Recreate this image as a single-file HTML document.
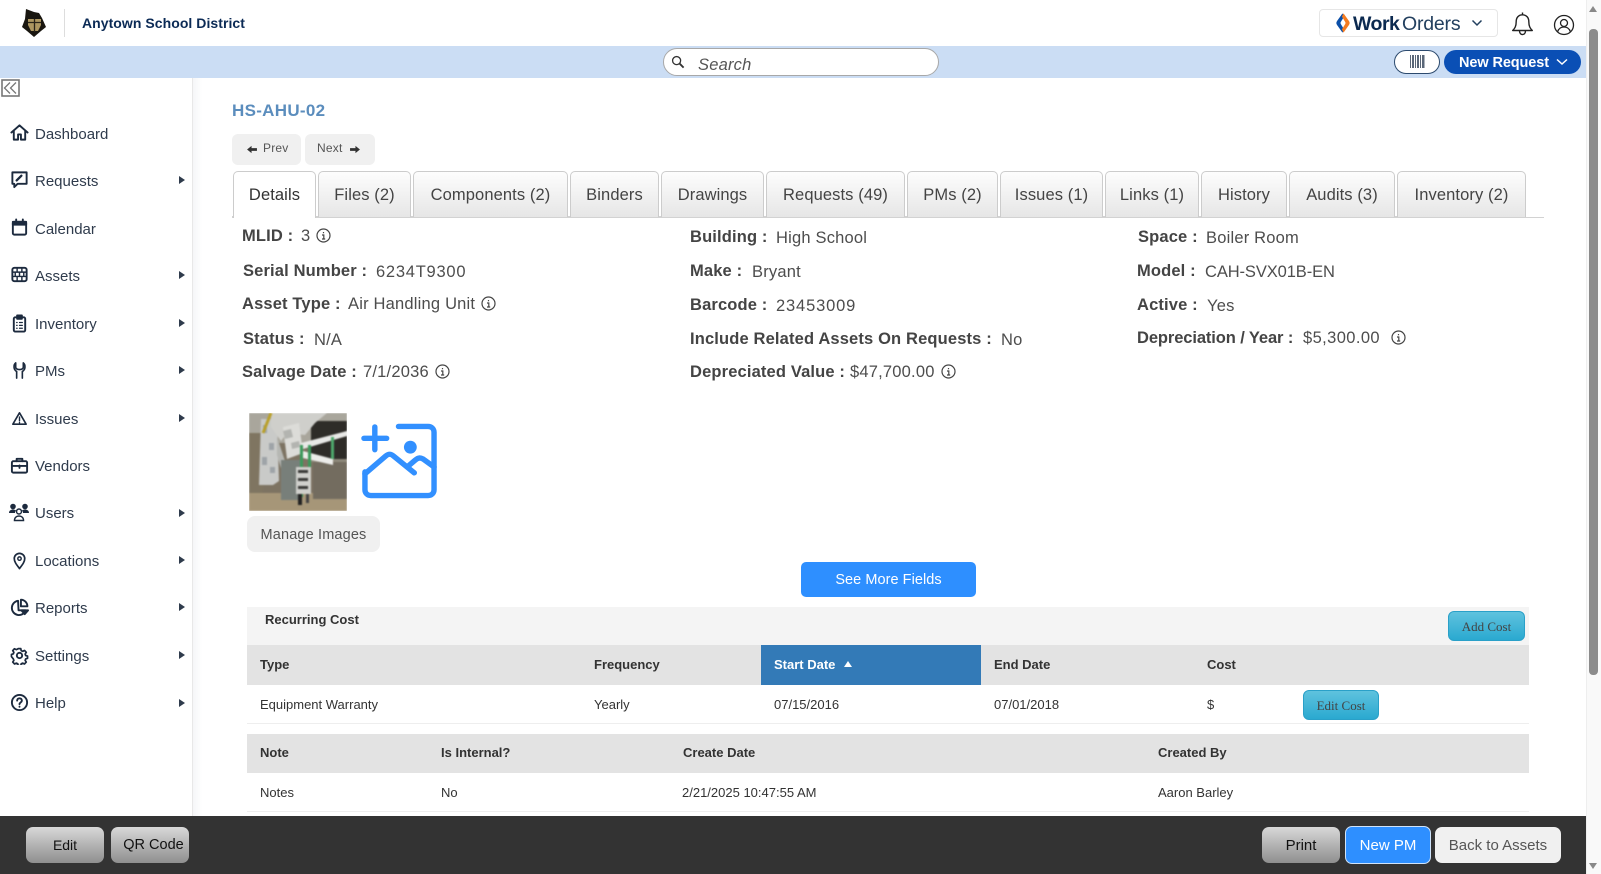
<!DOCTYPE html>
<html><head><meta charset="utf-8"><title>HS-AHU-02</title>
<style>
*{box-sizing:border-box}
html,body{margin:0;padding:0;width:1601px;height:874px;overflow:hidden;background:#fff;font-family:"Liberation Sans",sans-serif}
.a{position:absolute}
.t{position:absolute;white-space:nowrap;height:20px;line-height:20px}
.nav{font-size:15px;color:#2f3b4c;margin-top:.5px}
.arr{position:absolute;left:179px;width:0;height:0;border-left:6px solid #2f3b4c;border-top:4.5px solid transparent;border-bottom:4.5px solid transparent}
.ic{position:absolute;left:9.500px;width:19px;height:19px;fill:none;stroke:#1c2a3e;stroke-width:2;stroke-linecap:round;stroke-linejoin:round}
.tab{position:absolute;top:171px;height:46px;border:1px solid #ccc;border-bottom:0;border-radius:5px 5px 0 0;background:linear-gradient(#fdfdfd,#e6e6e6);color:#444;font-size:16.500px;letter-spacing:.1px;text-align:center;line-height:47px}
.l{font-weight:bold;font-size:16.500px;color:#444;letter-spacing:.15px;margin-top:.5px}
.v{font-size:16.500px;color:#4d4d4d;letter-spacing:.2px;margin-top:.5px}
.info{position:absolute;width:15px;height:15px;fill:none;stroke:#444;stroke-width:1.2}
.th{font-weight:bold;font-size:13px;color:#333;margin-top:1px}
.td{font-size:13px;color:#333;margin-top:1px}
.fb{position:absolute;top:827px;height:36px;border-radius:7px;text-align:center;line-height:37px;font-size:15px;color:#111;background:linear-gradient(#d8d8d8,#8f8f8f)}
.cb{position:absolute;border:1px solid #2aa0c8;border-radius:6px;background:linear-gradient(#5fc2de,#2aa9d0);font-family:"Liberation Serif",serif;font-size:13px;color:#444;text-align:center}
</style></head><body>

<!-- header -->
<svg class="a" style="left:21px;top:8px" width="27" height="30" viewBox="0 0 27 30">
<path d="M5 1l8 3 5 1 3 5 4 9-5 4-7 6-7-6-5-4 3-8z" fill="#191610"/>
<path d="M7 11h13v6l-3 6h-7l-3-6z" fill="#ad9660"/>
<path d="M7 14.500h13M13.500 11v13" stroke="#2a2418" stroke-width="1.300"/>
</svg>
<div class="a" style="left:64px;top:9px;width:1px;height:28px;background:#ddd"></div>
<div class="t" style="left:82px;top:13px;font-weight:bold;font-size:14px;color:#0b2a55;letter-spacing:.05px">Anytown School District</div>

<div class="a" style="left:1319px;top:9px;width:179px;height:28px;border:1px solid #e6e6e6;border-radius:4px"></div>
<svg class="a" style="left:1335px;top:12px" width="16" height="22" viewBox="0 0 15 20">
<path d="M7 1L2 8c-1 1.500-1 2.500 0 4l5 7 1.500-3-3-5c-.5-1-.5-1 0-2l3-5z" fill="#0b4fa8"/>
<path d="M8 1l5 7c1 1.500 1 2.500 0 4l-5 7-1.500-3 3-5c.5-1 .5-1 0-2l-3-5z" fill="#f47b20"/>
</svg>
<div class="t" style="left:1353px;top:14px;font-size:19.500px;font-weight:bold;color:#0c2a50;letter-spacing:-.5px">Work</div>
<div class="t" style="left:1402px;top:14px;font-size:19.500px;color:#23405f;letter-spacing:-.2px">Orders</div>
<svg class="a" style="left:1471px;top:19px" width="12" height="8" viewBox="0 0 12 8" fill="none" stroke="#23405f" stroke-width="1.500"><path d="M1.500 1.500L6 6l4.500-4.500"/></svg>
<svg class="a" style="left:1511px;top:11px" width="23" height="25" viewBox="0 0 23 25" fill="none" stroke="#222" stroke-width="1.400" stroke-linejoin="round"><path d="M11.500 1.500v2.300M11.500 3.800c-4 0-6.300 3-6.300 6.700 0 5-1.500 7-3.500 9h19.600c-2-2-3.500-4-3.500-9 0-3.700-2.300-6.700-6.300-6.700zM8.500 19.800c0 5 6 5 6 0"/></svg>
<svg class="a" style="left:1553px;top:14px" width="22" height="22" viewBox="0 0 22 22" fill="none" stroke="#222" stroke-width="1.300"><circle cx="11" cy="11" r="9.500"/><circle cx="11" cy="9" r="3.500"/><path d="M4.500 18c1-3.500 3.500-5 6.500-5s5.500 1.500 6.500 5"/></svg>

<!-- blue bar -->
<div class="a" style="left:0;top:46px;width:1586px;height:32px;background:#cbddf4"></div>
<div class="a" style="left:663px;top:48px;width:276px;height:28px;background:#fff;border:1px solid #a8a8a8;border-radius:14px"></div>
<svg class="a" style="left:671px;top:55px" width="14" height="14" viewBox="0 0 15 15" fill="none" stroke="#333" stroke-width="1.400"><circle cx="6" cy="6" r="4.300"/><path d="M9.200 9.200L13.500 13.500" stroke-width="2"/></svg>
<div class="t" style="left:698px;top:55px;font-size:16.500px;font-style:italic;color:#555;letter-spacing:.2px">Search</div>
<div class="a" style="left:1394px;top:50px;width:46px;height:24px;background:#fff;border:1px solid #2c4a6e;border-radius:12px"></div>
<svg class="a" style="left:1410px;top:55px" width="15" height="13" viewBox="0 0 15 13" fill="#5a6778"><rect x="0" width="1" height="13"/><rect x="2" width="2" height="13"/><rect x="5" width="1" height="13"/><rect x="7" width="2" height="13"/><rect x="10" width="1" height="13"/><rect x="12" width="2.500" height="13"/></svg>
<div class="a" style="left:1444px;top:50px;width:137px;height:24px;background:#0a4fb5;border-radius:12px"></div>
<div class="t" style="left:1459px;top:53px;font-size:14.500px;font-weight:bold;color:#fff;letter-spacing:-.1px">New Request</div>
<svg class="a" style="left:1556px;top:58px" width="12" height="8" viewBox="0 0 12 8" fill="none" stroke="#fff" stroke-width="1.500"><path d="M1 1.500L6 6l5-4.500"/></svg>

<!-- sidebar -->
<div class="a" style="left:192px;top:78px;width:1px;height:738px;background:#e8e8e8"></div>
<div class="a" style="left:193px;top:78px;width:9px;height:738px;background:linear-gradient(90deg,#f5f6f8,#fff)"></div>
<svg class="a" style="left:1px;top:79px" width="19" height="18" viewBox="0 0 19 18" fill="none" stroke="#777"><rect x="1" y="1" width="17" height="16" stroke-width="1.600"/><path d="M9 3.500L3.500 9 9 14.500M15 3.500L9.500 9l5.500 5.500" stroke-width="1.300"/></svg>

<svg class="ic" style="top:123px" viewBox="0 0 20 20"><path d="M1.500 10L10 2.500 18.500 10M4 8v9.500h4.500V12h3v5.500H16V8"/></svg>
<div class="t nav" style="left:35px;top:124px">Dashboard</div>

<svg class="ic" style="top:170px" viewBox="0 0 20 20"><path d="M2.500 2.500h15v12H8L4.500 18v-3.500h-2z"/><path d="M7 11l5-5" stroke-width="2.400"/></svg>
<div class="t nav" style="left:35px;top:171px">Requests</div><div class="arr" style="top:176px"></div>

<svg class="ic" style="top:218px" viewBox="0 0 20 20"><rect x="3" y="4" width="14" height="13.500" rx="1.500"/><path d="M3 4h14v3H3z" fill="#1c2a3e"/><path d="M6.500 1.500v3M13.500 1.500v3"/></svg>
<div class="t nav" style="left:35px;top:219px">Calendar</div>

<svg class="ic" style="top:265px" viewBox="0 0 20 20"><rect x="2.500" y="3" width="15" height="14" rx="2"/><path d="M2.500 7.500h15M2.500 12h15M7.500 3v4.500M12.500 3v4.500M5.500 7.500V12M10 7.500V12M14.500 7.500V12M7.500 12v5M12.500 12v5" stroke-width="1.500"/></svg>
<div class="t nav" style="left:35px;top:266px">Assets</div><div class="arr" style="top:271px"></div>

<svg class="ic" style="top:314px" viewBox="0 0 20 20"><rect x="4" y="3.500" width="12" height="15" rx="1.500"/><rect x="7.500" y="1.500" width="5" height="3.500" fill="#1c2a3e"/><path d="M7 9h.5M10 9h3M7 12h.5M10 12h3M7 15h.5M10 15h3" stroke-width="1.300"/></svg>
<div class="t nav" style="left:35px;top:314px">Inventory</div><div class="arr" style="top:319px"></div>

<svg class="ic" style="top:361px" viewBox="0 0 20 20"><path d="M6 2C3.500 4 3.500 9 7 11v7M14 2c2.500 2 2.500 7-1 9v7M6 2v4.500c0 1.500 1.500 2.500 4 2.500s4-1 4-2.500V2" style="stroke-width:1.700"/></svg>
<div class="t nav" style="left:35px;top:361px">PMs</div><div class="arr" style="top:366px"></div>

<svg class="ic" style="top:409px" viewBox="0 0 20 20"><path d="M10 4l7 12h-14z" style="stroke-width:1.700"/><path d="M10 8.500v4M10 14.300v.3" style="stroke-width:1.500"/></svg>
<div class="t nav" style="left:35px;top:409px">Issues</div><div class="arr" style="top:414px"></div>

<svg class="ic" style="top:456px;left:10px" viewBox="0 0 20 20"><rect x="2" y="5.500" width="16" height="12" rx="1.500"/><path d="M7 5.500V3h6v2.500M2 10.500h16M10 10v2.500"/></svg>
<div class="t nav" style="left:35px;top:456px">Vendors</div>

<svg class="a" style="left:9px;top:503px" width="20" height="19" viewBox="0 0 20 19"><g fill="#1c2a3e"><circle cx="4" cy="3.500" r="2.800"/><circle cx="16" cy="3.500" r="2.800"/><path d="M0 10c0-2.500 2-3.500 4-3.500 1.500 0 2.500.5 3 1-.8.8-1 1.500-1 2.500zM20 10c0-2.500-2-3.500-4-3.500-1.500 0-2.500.5-3 1 .8.8 1 1.500 1 2.500z"/></g><g fill="none" stroke="#1c2a3e" stroke-width="1.500"><circle cx="10" cy="8.500" r="2.500"/><path d="M5.500 17.500c0-3 2-4.500 4.500-4.500s4.500 1.500 4.500 4.500z"/></g></svg>
<div class="t nav" style="left:35px;top:503px">Users</div><div class="arr" style="top:509px"></div>

<svg class="ic" style="top:551px" viewBox="0 0 20 20"><path d="M10 18.500c-3-4-5.500-7-5.500-10.500a5.500 5.500 0 0 1 11 0c0 3.500-2.500 6.500-5.500 10.500z" style="stroke-width:1.800"/><circle cx="10" cy="8" r="1.800" style="stroke-width:1.500"/></svg>
<div class="t nav" style="left:35px;top:551px">Locations</div><div class="arr" style="top:556px"></div>

<svg class="ic" style="top:598px" viewBox="0 0 20 20"><path d="M8.500 3a7.500 7.500 0 1 0 8 10H9z"/><path d="M11.500 1.800a7 7 0 0 1 6.800 7h-6.800z"/><path d="M12 13h7l-3.500 4z" fill="#1c2a3e"/></svg>
<div class="t nav" style="left:35px;top:598px">Reports</div><div class="arr" style="top:603px"></div>

<svg class="ic" style="top:646px" viewBox="0 0 20 20"><circle cx="10" cy="10" r="2.800"/><path d="M8.500 2h3l.5 2.300 1.700.8 2.200-1 2 2.200-1.300 2 .6 1.700 2.200.7v2.600l-2.200.7-.6 1.700 1.300 2-2 2.200-2.200-1-1.700.8-.5 2.300h-3l-.5-2.300-1.700-.8-2.200 1-2-2.200 1.300-2-.6-1.700L.6 11.300V8.700l2.200-.7.6-1.700-1.300-2 2-2.200 2.200 1 1.700-.8z" transform="translate(1 1) scale(.9)"/></svg>
<div class="t nav" style="left:35px;top:646px">Settings</div><div class="arr" style="top:651px"></div>

<svg class="ic" style="top:693px" viewBox="0 0 20 20"><circle cx="10" cy="10" r="8"/><path d="M7.500 8c0-3.200 5-3.200 5 0 0 2-2.500 2-2.500 3.700M10 14.300v.2"/></svg>
<div class="t nav" style="left:35px;top:693px">Help</div><div class="arr" style="top:699px"></div>

<!-- title + nav -->
<div class="t" style="left:232px;top:101px;font-size:17px;font-weight:bold;color:#5b8dbd;letter-spacing:.3px">HS-AHU-02</div>
<div class="a" style="left:232px;top:134px;width:69px;height:31px;background:#f0f0f0;border-radius:6px"></div>
<div class="a" style="left:305px;top:134px;width:70px;height:31px;background:#f0f0f0;border-radius:6px"></div>
<svg class="a" style="left:247px;top:145px" width="10" height="9" viewBox="0 0 11 10" fill="#333"><path d="M0 5l5-4v2.500h6v3H5V9z"/></svg>
<div class="t" style="left:263px;top:138px;font-size:12px;color:#555;letter-spacing:.2px">Prev</div>
<div class="t" style="left:317px;top:138px;font-size:12px;color:#555;letter-spacing:.2px">Next</div>
<svg class="a" style="left:350px;top:145px" width="10" height="9" viewBox="0 0 11 10" fill="#333"><path d="M11 5L6 1v2.500H0v3h6V9z"/></svg>

<!-- tabs -->
<div class="a" style="left:232px;top:216px;width:1312px;height:2px;background:#d2d2d2"></div>
<div class="a" style="left:1526px;top:216px;width:18px;height:1px;background:#fff"></div>
<div class="tab" style="left:233px;width:83px;background:#fff;height:47px;color:#333">Details</div>
<div class="tab" style="left:318px;width:93px">Files (2)</div>
<div class="tab" style="left:413px;width:155px">Components (2)</div>
<div class="tab" style="left:570px;width:89px">Binders</div>
<div class="tab" style="left:661px;width:103px">Drawings</div>
<div class="tab" style="left:766px;width:139px">Requests (49)</div>
<div class="tab" style="left:907px;width:91px">PMs (2)</div>
<div class="tab" style="left:1000px;width:103px">Issues (1)</div>
<div class="tab" style="left:1105px;width:94px">Links (1)</div>
<div class="tab" style="left:1201px;width:86px">History</div>
<div class="tab" style="left:1289px;width:106px">Audits (3)</div>
<div class="tab" style="left:1397px;width:129px">Inventory (2)</div>

<!-- fields col 1 -->
<div class="t l" style="left:242px;top:225px">MLID :</div><div class="t v" style="left:301px;top:225px">3</div>
<svg class="info" style="left:316px;top:228px" viewBox="0 0 15 15"><circle cx="7.500" cy="7.500" r="6.500"/><path d="M7.500 4v1.300M6 7h1.800v4M6 11h3.200"/></svg>
<div class="t l" style="left:243px;top:260px">Serial Number :</div><div class="t v" style="left:376px;top:261px;letter-spacing:.75px">6234T9300</div>
<div class="t l" style="left:242px;top:293px">Asset Type :</div><div class="t v" style="left:348px;top:293px">Air Handling Unit</div>
<svg class="info" style="left:481px;top:296px" viewBox="0 0 15 15"><circle cx="7.500" cy="7.500" r="6.500"/><path d="M7.500 4v1.300M6 7h1.800v4M6 11h3.200"/></svg>
<div class="t l" style="left:243px;top:328px">Status :</div><div class="t v" style="left:314px;top:329px">N/A</div>
<div class="t l" style="left:242px;top:361px">Salvage Date :</div><div class="t v" style="left:363px;top:361px">7/1/2036</div>
<svg class="info" style="left:435px;top:364px" viewBox="0 0 15 15"><circle cx="7.500" cy="7.500" r="6.500"/><path d="M7.500 4v1.300M6 7h1.800v4M6 11h3.200"/></svg>

<!-- col 2 -->
<div class="t l" style="left:690px;top:226px">Building :</div><div class="t v" style="left:776px;top:227px">High School</div>
<div class="t l" style="left:690px;top:260px">Make :</div><div class="t v" style="left:752px;top:261px">Bryant</div>
<div class="t l" style="left:690px;top:294px">Barcode :</div><div class="t v" style="left:776px;top:295px;letter-spacing:.85px">23453009</div>
<div class="t l" style="left:690px;top:328px">Include Related Assets On Requests :</div><div class="t v" style="left:1001px;top:329px">No</div>
<div class="t l" style="left:690px;top:361px">Depreciated Value :</div><div class="t v" style="left:850px;top:361px">$47,700.00</div>
<svg class="info" style="left:941px;top:364px" viewBox="0 0 15 15"><circle cx="7.500" cy="7.500" r="6.500"/><path d="M7.500 4v1.300M6 7h1.800v4M6 11h3.200"/></svg>

<!-- col 3 -->
<div class="t l" style="left:1138px;top:226px">Space :</div><div class="t v" style="left:1206px;top:227px">Boiler Room</div>
<div class="t l" style="left:1137px;top:260px">Model :</div><div class="t v" style="left:1205px;top:261px;letter-spacing:-.1px">CAH-SVX01B-EN</div>
<div class="t l" style="left:1137px;top:294px">Active :</div><div class="t v" style="left:1207px;top:295px">Yes</div>
<div class="t l" style="left:1137px;top:327px;letter-spacing:-.1px">Depreciation / Year :</div><div class="t v" style="left:1303px;top:327px;letter-spacing:.4px">$5,300.00</div>
<svg class="info" style="left:1391px;top:330px" viewBox="0 0 15 15"><circle cx="7.500" cy="7.500" r="6.500"/><path d="M7.500 4v1.300M6 7h1.800v4M6 11h3.200"/></svg>

<!-- thumbnail -->
<svg class="a" style="left:249px;top:413px" width="98" height="98" viewBox="0 0 98 98">
<g style="filter:blur(.7px)">
<rect width="98" height="98" fill="#7d7362"/>
<rect x="0" y="0" width="98" height="30" fill="#a9a69c"/>
<rect x="62" y="8" width="36" height="40" fill="#2e2c28"/>
<rect x="0" y="20" width="14" height="62" fill="#7f7561"/>
<rect x="0" y="80" width="98" height="18" fill="#a69678"/>
<path d="M12 6h16l2 62-6 4H10z" fill="#c9cac8"/>
<path d="M14 12h4v8h-4zM20 30h5v7h-5zM13 44h5v8h-5zM21 54h5v6h-5z" fill="#9ea4a8"/>
<path d="M28 24l10 30-4 8-6-20z" fill="#b6b7b3"/>
<path d="M22 0h56l-12 10-10 12-18-2-6 8-10-14z" fill="#cfcfcb"/>
<path d="M34 14l16-4 4 30-16 6z" fill="#dcdcd8"/>
<path d="M34 18l8-2 2 8-8 2zM42 30l8-2 1 6-8 2z" fill="#b3b4b0"/>
<rect x="32" y="47" width="20" height="40" fill="#787f7a"/>
<rect x="64" y="46" width="34" height="40" fill="#736c5f"/>
<path d="M62 46h36v3H62z" fill="#8f897b"/>
<path d="M52 30L98 18v5L54 36z" fill="#e8e8e6"/>
<path d="M54 38l30 8v6l-30-7z" fill="#ecece9"/>
<rect x="51" y="32" width="3" height="52" fill="#3c9a5c"/>
<rect x="59" y="32" width="3" height="48" fill="#3c9a5c"/>
<rect x="82" y="24" width="3" height="22" fill="#4da86b"/>
<rect x="47" y="54" width="15" height="27" fill="#d0d0cc"/>
<path d="M49 57h10v3H49zM49 65h10v3H49zM49 73h10v3H49z" fill="#3a3a38"/>
<rect x="49" y="81" width="4" height="11" fill="#222"/>
<rect x="57" y="81" width="3" height="9" fill="#444"/>
<path d="M22 0L14 20" stroke="#b9a02a" stroke-width="3"/>
</g>
</svg>
<!-- add image -->
<svg class="a" style="left:361px;top:422px" width="76" height="78" viewBox="0 0 77 78" fill="none" stroke="#3290ff" stroke-width="5.500" stroke-linecap="round" stroke-linejoin="round">
<path d="M38 4h30c3.500 0 6 2.500 6 6v58c0 3.500-2.500 6-6 6H10c-3.500 0-6-2.500-6-6V50"/>
<path d="M4 52l21-18c3-2.500 5-2.500 8 0l21 17M48 44l7-6c3-2.500 5-2.500 8-1l11 8"/>
<path d="M14 4.500v23M3 16h23"/>
<circle cx="50" cy="25" r="6.500" fill="#3290ff" stroke="none"/>
</svg>
<div class="a" style="left:247px;top:516px;width:133px;height:36px;background:#f0f0f0;border-radius:8px;text-align:center;line-height:38px;font-size:14.500px;color:#555;letter-spacing:.15px">Manage Images</div>
<div class="a" style="left:801px;top:562px;width:175px;height:35px;background:#2e8fff;border-radius:5px;text-align:center;line-height:36px;font-size:14.500px;color:#fff;letter-spacing:.05px">See More Fields</div>

<!-- table 1 -->
<div class="a" style="left:247px;top:607px;width:1282px;height:38px;background:#f4f4f4"></div>
<div class="t th" style="left:265px;top:609px">Recurring Cost</div>
<div class="cb" style="left:1448px;top:611px;width:77px;height:30px;line-height:30px">Add Cost</div>
<div class="a" style="left:247px;top:645px;width:1282px;height:40px;background:#e3e3e3"></div>
<div class="a" style="left:761px;top:645px;width:220px;height:40px;background:#337ab7"></div>
<div class="t th" style="left:260px;top:654px">Type</div>
<div class="t th" style="left:594px;top:654px">Frequency</div>
<div class="t th" style="left:774px;top:654px;color:#fff">Start Date</div>
<div class="a" style="left:844px;top:661px;width:0;height:0;border-left:4.500px solid transparent;border-right:4.500px solid transparent;border-bottom:6px solid #fff"></div>
<div class="t th" style="left:994px;top:654px">End Date</div>
<div class="t th" style="left:1207px;top:654px">Cost</div>
<div class="t td" style="left:260px;top:694px">Equipment Warranty</div>
<div class="t td" style="left:594px;top:694px">Yearly</div>
<div class="t td" style="left:774px;top:694px">07/15/2016</div>
<div class="t td" style="left:994px;top:694px">07/01/2018</div>
<div class="t td" style="left:1207px;top:694px">$</div>
<div class="cb" style="left:1303px;top:690px;width:76px;height:30px;line-height:30px">Edit Cost</div>
<div class="a" style="left:247px;top:723px;width:1282px;height:1px;background:#eee"></div>

<!-- table 2 -->
<div class="a" style="left:247px;top:734px;width:1282px;height:39px;background:#e3e3e3"></div>
<div class="t th" style="left:260px;top:742px">Note</div>
<div class="t th" style="left:441px;top:742px">Is Internal?</div>
<div class="t th" style="left:683px;top:742px">Create Date</div>
<div class="t th" style="left:1158px;top:742px">Created By</div>
<div class="t td" style="left:260px;top:782px">Notes</div>
<div class="t td" style="left:441px;top:782px">No</div>
<div class="t td" style="left:682px;top:782px">2/21/2025 10:47:55 AM</div>
<div class="t td" style="left:1158px;top:782px">Aaron Barley</div>
<div class="a" style="left:247px;top:811px;width:1282px;height:1px;background:#eee"></div>

<!-- footer -->
<div class="a" style="left:0;top:816px;width:1586px;height:58px;background:#333"></div>
<div class="fb" style="left:26px;width:78px;font-size:14px">Edit</div>
<div class="fb" style="left:111px;width:78px;font-size:14.500px;padding-left:7px">QR Code</div>
<div class="fb" style="left:1262px;width:78px">Print</div>
<div class="fb" style="left:1345px;top:826px;width:86px;height:38px;line-height:38px;background:#2e8fff;border:1px solid #cfe3fa;color:#fff">New PM</div>
<div class="fb" style="left:1435px;width:126px;background:#f0f0f0;color:#555">Back to Assets</div>

<!-- scrollbar -->
<div class="a" style="left:1586px;top:0;width:15px;height:874px;background:#f9f9f9;border-left:1px solid #eee"></div>
<div class="a" style="left:1589px;top:29px;width:9px;height:646px;background:#8c8c8c;border-radius:4px"></div>
<div class="a" style="left:1589px;top:6px;width:0;height:0;border-left:4.500px solid transparent;border-right:4.500px solid transparent;border-bottom:6px solid #888"></div>
<div class="a" style="left:1589px;top:863px;width:0;height:0;border-left:4.500px solid transparent;border-right:4.500px solid transparent;border-top:6px solid #888"></div>
</body></html>
